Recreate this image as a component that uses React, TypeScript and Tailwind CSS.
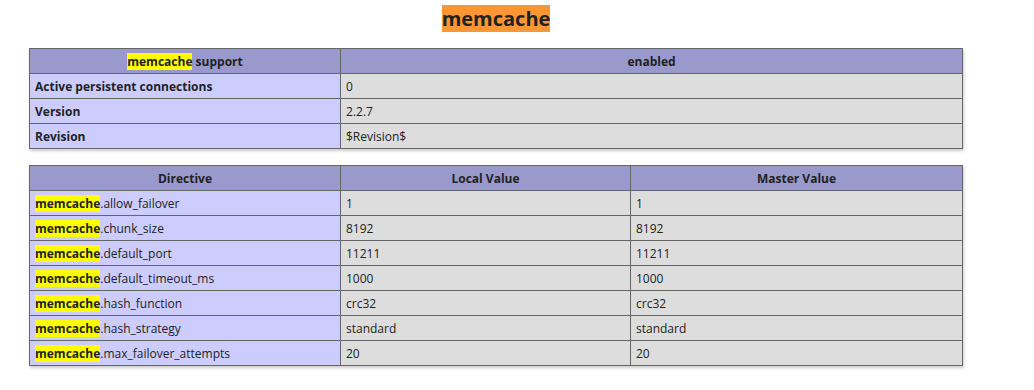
const support = [
  ['Active persistent connections', '0'],
  ['Version', '2.2.7'],
  ['Revision', '$Revision$'],
];

const directives = [
  ['allow_failover', '1', '1'],
  ['chunk_size', '8192', '8192'],
  ['default_port', '11211', '11211'],
  ['default_timeout_ms', '1000', '1000'],
  ['hash_function', 'crc32', 'crc32'],
  ['hash_strategy', 'standard', 'standard'],
  ['max_failover_attempts', '20', '20'],
];

const cell = 'border border-[#666] px-[5px] pt-[5px] pb-[3px] leading-[16px] align-baseline';

const Mark = ({ children }: { children: string }) => (
  <span className="bg-[#ffff00]">{children}</span>
);

export default function App() {
  return (
    <div className="w-[992px] bg-white text-[#222] font-['Open_Sans','Noto_Sans',sans-serif] text-[12px]">
      <h2 className="pt-[6px] text-center text-[20px] font-bold leading-[26px]">
        <span className="bg-[#ff9632]">memcache</span>
      </h2>

      <table className="mt-[16px] ml-[29px] w-[934px] border-collapse shadow-[1px_2px_3px_#ccc]">
        <tbody>
          <tr className="bg-[#9999cc] font-bold">
            <th className={`${cell} w-[311px]`}>
              <Mark>memcache</Mark> support
            </th>
            <th className={cell}>enabled</th>
          </tr>
          {support.map(([k, v]) => (
            <tr key={k}>
              <td className={`${cell} w-[311px] bg-[#ccccff] font-bold`}>{k}</td>
              <td className={`${cell} bg-[#dddddd]`}>{v}</td>
            </tr>
          ))}
        </tbody>
      </table>

      <table className="mt-[16px] ml-[29px] w-[934px] border-collapse shadow-[1px_2px_3px_#ccc]">
        <tbody>
          <tr className="bg-[#9999cc] font-bold">
            <th className={`${cell} w-[311px]`}>Directive</th>
            <th className={`${cell} w-[290px]`}>Local Value</th>
            <th className={cell}>Master Value</th>
          </tr>
          {directives.map(([k, local, master]) => (
            <tr key={k}>
              <td className={`${cell} bg-[#ccccff]`}>
                <b>
                  <Mark>memcache</Mark>
                </b>
                .{k}
              </td>
              <td className={`${cell} bg-[#dddddd]`}>{local}</td>
              <td className={`${cell} bg-[#dddddd]`}>{master}</td>
            </tr>
          ))}
        </tbody>
      </table>

      <h2 className="mt-[20px] text-center text-[20px] font-bold leading-[26px]">mysqli</h2>
    </div>
  );
}
